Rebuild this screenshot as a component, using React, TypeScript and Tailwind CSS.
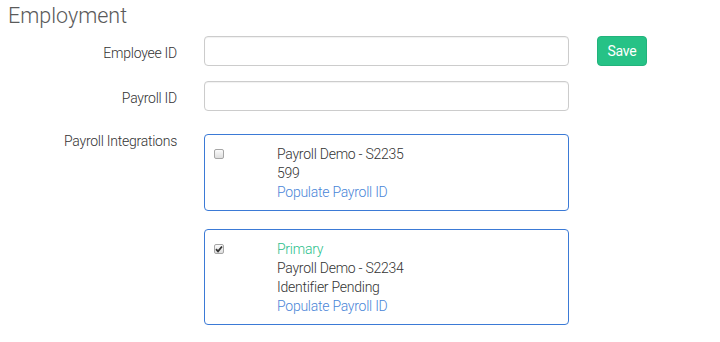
import { useState } from "react";

type Integration = {
  id: string;
  primary?: boolean;
  name: string;
  identifier: string;
  checked: boolean;
};

const INTEGRATIONS: Integration[] = [
  { id: "s2235", name: "Payroll Demo - S2235", identifier: "599", checked: false },
  { id: "s2234", primary: true, name: "Payroll Demo - S2234", identifier: "Identifier Pending", checked: true },
];

function Box({ checked }: { checked: boolean }) {
  return (
    <span className="mt-[3px] flex h-[10px] w-[10px] items-center justify-center rounded-[2px] border border-[#a6a6a6] bg-gradient-to-b from-[#fbfbfb] to-[#dedede]">
      {checked && (
        <svg width="8" height="8" viewBox="0 0 8 8">
          <path d="M1 4.2 L3 6.3 L7 1.5" fill="none" stroke="#333" strokeWidth="1.8" />
        </svg>
      )}
    </span>
  );
}

export default function App() {
  const [items, setItems] = useState(INTEGRATIONS);

  return (
    <div className="min-h-[342px] bg-white font-['Roboto',sans-serif] text-[14px] font-light tracking-[-0.25px] text-[#333]">
      <h1 className="pl-[8px] pt-[1px] text-[21.5px] font-light leading-[29px] tracking-normal text-[#5a5a5a]">Employment</h1>

      <div className="mt-[6px] grid grid-cols-[177px_365px_auto] gap-x-[27px]">
        <label className="pt-[7px] text-right leading-[20px]">Employee ID</label>
        <div className="flex items-start">
          <input className="h-[30px] w-full rounded-[4px] border border-[#ccc] px-3 shadow-[inset_0_1px_1px_rgba(0,0,0,0.06)] outline-none" />
        </div>
        <div className="pl-[1px]">
          <button className="h-[30px] w-[50px] rounded-[4px] border border-[#22b37c] bg-[#26c286] text-[14px] font-normal text-white">
            Save
          </button>
        </div>

        <label className="mt-[15px] pt-[7px] text-right leading-[20px]">Payroll ID</label>
        <div className="mt-[15px]">
          <input className="h-[30px] w-full rounded-[4px] border border-[#ccc] px-3 shadow-[inset_0_1px_1px_rgba(0,0,0,0.06)] outline-none" />
        </div>
        <div />

        <label className="mt-[20px] text-right leading-[20px]">Payroll Integrations</label>
        <div className="mt-[23px] flex flex-col gap-[18px]">
          {items.map((it) => (
            <div
              key={it.id}
              className="flex rounded-[4px] border border-[#3b7ad6] pb-[8px] pl-[9px] pt-[10px] leading-[19px]"
              onClick={() =>
                setItems((prev) => prev.map((p) => (p.id === it.id ? { ...p, checked: !p.checked } : p)))
              }
            >
              <div className="w-[63px] pt-[1px]">
                <Box checked={it.checked} />
              </div>
              <div>
                {it.primary && <div className="text-[#2bbf8c]">Primary</div>}
                <div>{it.name}</div>
                <div>{it.identifier}</div>
                <div className="text-[#4a86d8]">Populate Payroll ID</div>
              </div>
            </div>
          ))}
        </div>
        <div />
      </div>
    </div>
  );
}
